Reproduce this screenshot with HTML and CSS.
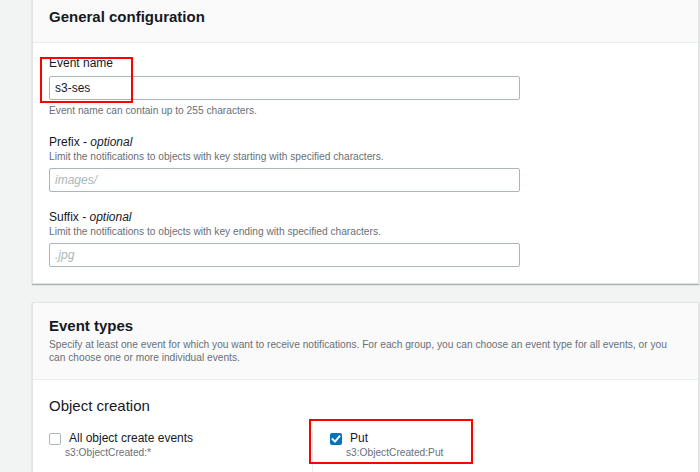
FILE: index.html
```html
<!DOCTYPE html>
<html lang="en">
<head>
<meta charset="utf-8">
<title>Create event notification</title>
<link rel="stylesheet" href="styles.css">
</head>
<body>
<div class="page">
  <section class="card card-general">
    <header class="card-head">
      <h2 class="card-title">General configuration</h2>
    </header>
    <div class="card-body">
      <div class="field">
        <label class="field-label" for="ev-name">Event name</label>
        <input class="text-input" id="ev-name" type="text" value="s3-ses">
        <p class="field-desc field-hint">Event name can contain up to 255 characters.</p>
      </div>
      <div class="field">
        <label class="field-label" for="ev-prefix">Prefix - <i>optional</i></label>
        <p class="field-desc">Limit the notifications to objects with key starting with specified characters.</p>
        <input class="text-input" id="ev-prefix" type="text" placeholder="images/">
      </div>
      <div class="field">
        <label class="field-label" for="ev-suffix">Suffix - <i>optional</i></label>
        <p class="field-desc">Limit the notifications to objects with key ending with specified characters.</p>
        <input class="text-input" id="ev-suffix" type="text" placeholder=".jpg">
      </div>
    </div>
  </section>

  <section class="card card-types">
    <header class="card-head">
      <h2 class="card-title">Event types</h2>
      <p class="field-desc head-desc">Specify at least one event for which you want to receive notifications. For each group, you can choose an event type for all events, or you can choose one or more individual events.</p>
    </header>
    <div class="card-body types-body">
      <h3 class="group-title">Object creation</h3>
      <div class="options">
        <div class="option">
          <span class="check"></span>
          <span class="option-text">
            <span class="option-label">All object create events</span>
            <span class="option-sub">s3:ObjectCreated:*</span>
          </span>
        </div>
        <div class="option option-divided">
          <span class="check check-on">
            <svg width="12" height="12" viewBox="0 0 12 12"><polyline points="2.6,6.2 5,8.6 9.4,3.4" fill="none" stroke="#fff" stroke-width="2" stroke-linecap="square"/></svg>
          </span>
          <span class="option-text">
            <span class="option-label">Put</span>
            <span class="option-sub">s3:ObjectCreated:Put</span>
          </span>
        </div>
      </div>
    </div>
  </section>

  <span class="annot annot-name"></span>
  <span class="annot annot-put"></span>
</div>
</body>
</html>
```

FILE: styles.css
```css
* {
  box-sizing: border-box;
}

html, body {
  margin: 0;
  overflow: hidden;
}

body {
  background: #f2f3f3;
  font-family: "Liberation Sans", Arial, sans-serif;
  color: #16191f;
}

.page {
  position: relative;
  display: flow-root;
  padding-left: 32px;
}

.card {
  width: 667px;
  background: #fff;
  border: 1px solid #e1e4e4;
  box-shadow: 0 1px 1px rgba(0, 28, 36, 0.3);
}

.card-general {
  margin-top: -8px;
}

.card-types {
  margin-top: 18px;
}

.card-head {
  background: #fafafa;
  border-bottom: 1px solid #eaeded;
  padding: 14px 16px 15px;
}

.card-types .card-head {
  padding-top: 13px;
}

.card-title {
  margin: 0;
  font-size: 15px;
  line-height: 20px;
  font-weight: 700;
}

.card-body {
  padding: 13px 16px 16px;
}

.field + .field {
  margin-top: 18px;
}

.field-label {
  display: block;
  font-size: 12px;
  line-height: 15px;
}

.field-desc {
  margin: 0;
  font-size: 10.2px;
  line-height: 13px;
  color: #687078;
}

.field-hint {
  margin-top: 4px;
}

.head-desc {
  margin-top: 2px;
  max-width: 630px;
}

.text-input {
  display: block;
  margin: 5px 0 0;
  width: 471px;
  height: 24px;
  border: 1px solid #aab7b8;
  border-radius: 2px;
  padding: 0 5px;
  font-family: "Liberation Sans", Arial, sans-serif;
  font-size: 12px;
  color: #16191f;
  background: #fff;
  outline: none;
}

.text-input::placeholder {
  color: #aab7b8;
  font-style: italic;
}

.types-body {
  padding-top: 16px;
  padding-bottom: 40px;
}

.group-title {
  margin: 0;
  font-size: 15px;
  line-height: 20px;
  font-weight: 400;
}

.options {
  display: grid;
  grid-template-columns: 263px 1fr;
  margin-top: 15px;
}

.option {
  display: flex;
  align-items: flex-start;
  padding-bottom: 20px;
}

.option-divided {
  border-left: 1px solid #eaeded;
  padding-left: 17px;
}

.check {
  flex: none;
  width: 12px;
  height: 12px;
  margin-top: 2px;
  border: 1px solid #aab7b8;
  border-radius: 2px;
  background: #fff;
}

.check-on {
  border: none;
  background: #0073bb;
}

.check-on svg {
  display: block;
}

.option-text {
  margin-left: 4px;
}

.option-label {
  display: block;
  padding-left: 4px;
  font-size: 12px;
  line-height: 15px;
}

.option-sub {
  display: block;
  font-size: 10.2px;
  line-height: 13px;
  color: #687078;
}

.annot {
  position: absolute;
  border: 2px solid #ff0000;
  pointer-events: none;
}

.annot-name {
  left: 40px;
  top: 57px;
  width: 93px;
  height: 46px;
}

.annot-put {
  left: 309px;
  top: 419px;
  width: 164px;
  height: 45px;
}
```
